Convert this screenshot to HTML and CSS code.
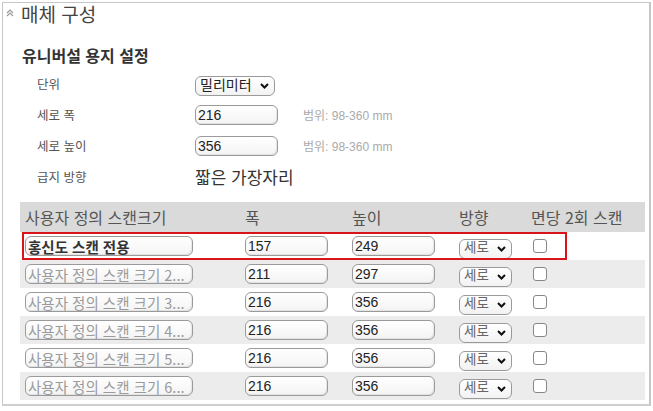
FILE: index.html
```html
<!DOCTYPE html>
<html lang="ko">
<head>
<meta charset="utf-8">
<link rel="stylesheet" href="styles.css">
</head>
<body>
<div class="panel">
  <div class="title">
    <svg class="chev" width="8" height="8" viewBox="0 0 8 8"><path d="M1 4 L4 1 L7 4 M1 7 L4 4 L7 7" fill="none" stroke="#9a9a9a" stroke-width="1.2"/></svg>
    <span>매체 구성</span>
  </div>
  <h2 class="sub">유니버설 용지 설정</h2>
  <div class="settings">
    <div class="lbl">단위</div>
    <div class="ctl"><span class="selwrap unit"><select class="sel"><option>밀리미터</option></select><svg class="arr" width="9" height="6" viewBox="0 0 9 6"><path d="M1 1 L4.5 4.5 L8 1" fill="none" stroke="#111" stroke-width="2"/></svg></span></div>
    <div></div>
    <div class="lbl">세로 폭</div>
    <div class="ctl"><input class="inp num" value="216"></div>
    <div class="range">범위: 98-360 mm</div>
    <div class="lbl">세로 높이</div>
    <div class="ctl"><input class="inp num" value="356"></div>
    <div class="range">범위: 98-360 mm</div>
    <div class="lbl">급지 방향</div>
    <div class="ctl feed">짧은 가장자리</div>
    <div></div>
  </div>
  <div class="table">
    <div class="row head">
      <div class="c first">사용자 정의 스캔크기</div>
      <div class="c">폭</div>
      <div class="c">높이</div>
      <div class="c">방향</div>
      <div class="c">면당 2회 스캔</div>
    </div>
    <div class="row">
      <div class="c first"><input class="inp name filled" value="홍신도 스캔 전용"></div>
      <div class="c"><input class="inp num" value="157"></div>
      <div class="c"><input class="inp num" value="249"></div>
      <div class="c"><span class="selwrap dir"><select class="sel"><option>세로</option></select><svg class="arr" width="9" height="6" viewBox="0 0 9 6"><path d="M1 1 L4.5 4.5 L8 1" fill="none" stroke="#111" stroke-width="2"/></svg></span></div>
      <div class="c"><input type="checkbox" class="chk"></div>
    </div>
    <div class="row alt">
      <div class="c first"><input class="inp name" value="사용자 정의 스캔 크기 2..."></div>
      <div class="c"><input class="inp num" value="211"></div>
      <div class="c"><input class="inp num" value="297"></div>
      <div class="c"><span class="selwrap dir"><select class="sel"><option>세로</option></select><svg class="arr" width="9" height="6" viewBox="0 0 9 6"><path d="M1 1 L4.5 4.5 L8 1" fill="none" stroke="#111" stroke-width="2"/></svg></span></div>
      <div class="c"><input type="checkbox" class="chk"></div>
    </div>
    <div class="row">
      <div class="c first"><input class="inp name" value="사용자 정의 스캔 크기 3..."></div>
      <div class="c"><input class="inp num" value="216"></div>
      <div class="c"><input class="inp num" value="356"></div>
      <div class="c"><span class="selwrap dir"><select class="sel"><option>세로</option></select><svg class="arr" width="9" height="6" viewBox="0 0 9 6"><path d="M1 1 L4.5 4.5 L8 1" fill="none" stroke="#111" stroke-width="2"/></svg></span></div>
      <div class="c"><input type="checkbox" class="chk"></div>
    </div>
    <div class="row alt">
      <div class="c first"><input class="inp name" value="사용자 정의 스캔 크기 4..."></div>
      <div class="c"><input class="inp num" value="216"></div>
      <div class="c"><input class="inp num" value="356"></div>
      <div class="c"><span class="selwrap dir"><select class="sel"><option>세로</option></select><svg class="arr" width="9" height="6" viewBox="0 0 9 6"><path d="M1 1 L4.5 4.5 L8 1" fill="none" stroke="#111" stroke-width="2"/></svg></span></div>
      <div class="c"><input type="checkbox" class="chk"></div>
    </div>
    <div class="row">
      <div class="c first"><input class="inp name" value="사용자 정의 스캔 크기 5..."></div>
      <div class="c"><input class="inp num" value="216"></div>
      <div class="c"><input class="inp num" value="356"></div>
      <div class="c"><span class="selwrap dir"><select class="sel"><option>세로</option></select><svg class="arr" width="9" height="6" viewBox="0 0 9 6"><path d="M1 1 L4.5 4.5 L8 1" fill="none" stroke="#111" stroke-width="2"/></svg></span></div>
      <div class="c"><input type="checkbox" class="chk"></div>
    </div>
    <div class="row alt">
      <div class="c first"><input class="inp name" value="사용자 정의 스캔 크기 6..."></div>
      <div class="c"><input class="inp num" value="216"></div>
      <div class="c"><input class="inp num" value="356"></div>
      <div class="c"><span class="selwrap dir"><select class="sel"><option>세로</option></select><svg class="arr" width="9" height="6" viewBox="0 0 9 6"><path d="M1 1 L4.5 4.5 L8 1" fill="none" stroke="#111" stroke-width="2"/></svg></span></div>
      <div class="c"><input type="checkbox" class="chk"></div>
    </div>
    <div class="hl"></div>
  </div>
</div>
</body>
</html>
```

FILE: styles.css
```css
html, body {
  margin: 0;
  padding: 0;
  background: #fff;
}
body {
  font-family: "Noto Sans CJK KR", "Liberation Sans", sans-serif;
  color: #333;
}
.panel {
  margin: 2px 0 0 2px;
  width: 649px;
  height: 404px;
  box-sizing: border-box;
  border: 1px solid #c6c6c6;
  border-right: 2px solid #c6c6c6;
  border-bottom: 2px solid #cfcfcf;
}
.title {
  height: 22px;
  display: flex;
  align-items: center;
  padding-left: 3px;
  font-size: 19px;
  line-height: 22px;
  color: #444;
}
.chev {
  margin-right: 7px;
  margin-top: -3px;
}
.sub {
  margin: 20px 0 0 19px;
  font-size: 16px;
  line-height: 20px;
  font-weight: bold;
  color: #333;
}
.settings {
  margin: 3px 0 0 34px;
  display: grid;
  grid-template-columns: 158px 108px auto;
  grid-auto-rows: 31px;
  align-items: center;
}
.lbl {
  font-size: 12.5px;
  color: #555;
}
.range {
  font-family: "Liberation Sans", "Noto Sans CJK KR", sans-serif;
  font-size: 12px;
  color: #aaa;
}
.feed {
  font-size: 17px;
  color: #333;
}
.inp {
  box-sizing: border-box;
  height: 20px;
  border: 1px solid #9a9a9a;
  border-radius: 6px;
  background: linear-gradient(#fff, #f4f4f4);
  box-shadow: inset -1px -1px 1px rgba(0,0,0,0.08);
  padding: 0 2px;
  font-family: "Liberation Sans", "Noto Sans CJK KR", sans-serif;
  font-size: 14px;
  color: #222;
  outline: none;
  display: block;
}
.inp.num {
  width: 83px;
}
.inp.name {
  width: 168px;
  font-family: "Noto Sans CJK KR", "Liberation Sans", sans-serif;
  font-size: 14.5px;
  color: #9a9a9a;
}
.inp.name.filled {
  font-weight: bold;
  color: #333;
}
.selwrap {
  position: relative;
  display: inline-block;
}
.sel {
  appearance: none;
  -webkit-appearance: none;
  box-sizing: border-box;
  height: 20px;
  border: 1px solid #9a9a9a;
  border-radius: 6px;
  background: linear-gradient(#fff, #f2f2f2);
  font-family: "Liberation Sans", "Noto Sans CJK KR", sans-serif;
  line-height: 14px;
  padding: 0 0 3px 4px;
  display: block;
  outline: none;
}
.unit .sel {
  width: 80px;
  font-size: 14px;
  color: #222;
}
.dir .sel {
  width: 53px;
  font-size: 13.5px;
  color: #666;
}
.arr {
  position: absolute;
  right: 6px;
  top: 7px;
  pointer-events: none;
}
.table {
  position: relative;
  margin: 10px 0 0 17px;
  width: 625px;
}
.row {
  display: grid;
  grid-template-columns: 225px 107px 107px 72px 1fr;
  align-items: center;
  height: 28px;
  background: #fff;
}
.row.alt {
  background: #ececec;
}
.row.head {
  height: 30px;
  background: #dadada;
  font-size: 16px;
  color: #555;
}
.c.first {
  padding-left: 5px;
}
.chk {
  appearance: none;
  -webkit-appearance: none;
  margin: 0 0 0 2px;
  width: 14px;
  height: 14px;
  box-sizing: border-box;
  border: 1px solid #888;
  border-radius: 3px;
  background: #fff;
  display: block;
}
.hl {
  position: absolute;
  left: 2px;
  top: 30px;
  width: 545px;
  height: 28px;
  box-sizing: border-box;
  border: 2px solid #d9141b;
  pointer-events: none;
}
```
